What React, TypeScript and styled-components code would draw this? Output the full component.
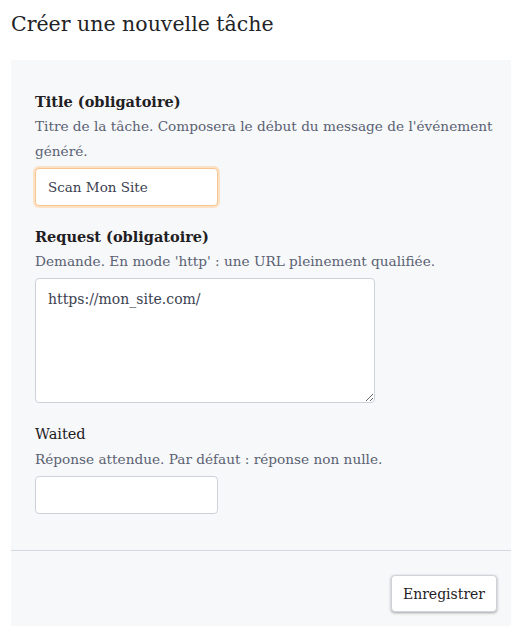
import React, { useEffect, useRef } from "react";
import styled, { createGlobalStyle } from "styled-components";

const Global = createGlobalStyle`
  html, body { margin: 0; padding: 0; background: #ffffff; }
  body { font-family: "DejaVu Serif", Georgia, serif; color: #1f2023; }
  * { box-sizing: border-box; }
`;

const Page = styled.div`
  padding: 0 0 0 11px;
  width: 511px;
  overflow: hidden;
`;

const Heading = styled.h1`
  margin: 0;
  padding-top: 10px;
  height: 60px;
  font-size: 20.5px;
  line-height: 28px;
  font-weight: 400;
  color: #222326;
`;

const Panel = styled.div`
  background: #f7f8fa;
`;

const Body = styled.div`
  padding: 29px 14px 36px 24px;
`;

const Field = styled.div<{ $gap: number }>`
  margin-bottom: ${(p) => p.$gap}px;
`;

const Label = styled.label<{ $bold?: boolean }>`
  display: block;
  font-size: 14.5px;
  line-height: 25px;
  font-weight: ${(p) => (p.$bold ? 700 : 400)};
  color: #1f2023;
`;

const Help = styled.div`
  font-size: 13.65px;
  line-height: 25px;
  color: #5a6172;
  margin-bottom: 4px;
`;

const TextInput = styled.input<{ $focus?: boolean }>`
  display: block;
  width: 183px;
  height: 38px;
  padding: 0 12px;
  font-family: "DejaVu Serif", Georgia, serif;
  font-size: 13.5px;
  color: #3b4150;
  background: #ffffff;
  border: 1px solid ${(p) => (p.$focus ? "#f7c592" : "#cdd1d9")};
  border-radius: 4px;
  outline: none;
  box-shadow: ${(p) => (p.$focus ? "0 0 0 2px #fde1c4" : "none")};
  caret-color: #111;
`;

const TextArea = styled.textarea`
  display: block;
  width: 340px;
  height: 125px;
  padding: 8px 12px;
  font-family: "DejaVu Serif", Georgia, serif;
  font-size: 14px;
  line-height: 24px;
  color: #3b4150;
  background: #ffffff;
  border: 1px solid #cdd1d9;
  border-radius: 4px;
  outline: none;
  resize: both;
`;

const Footer = styled.div`
  border-top: 1px solid #d5d8de;
  display: flex;
  justify-content: flex-end;
  padding: 24px 14px 14px 0;
`;

const Button = styled.button`
  width: 106px;
  height: 37px;
  font-family: "DejaVu Serif", Georgia, serif;
  font-size: 14px;
  color: #1f2023;
  background: #ffffff;
  border: 1px solid #d0d3d9;
  border-radius: 4px;
  box-shadow: 0 1px 3px rgba(0, 0, 0, 0.35);
  cursor: pointer;
`;

export default function App() {
  const ref = useRef<HTMLInputElement>(null);
  useEffect(() => {
    const el = ref.current;
    if (el) {
      el.focus();
      const n = el.value.length;
      el.setSelectionRange(n, n);
    }
  }, []);
  return (
    <>
      <Global />
      <Page>
        <Heading>Créer une nouvelle tâche</Heading>
        <Panel>
          <Body>
            <Field $gap={18}>
              <Label $bold>Title (obligatoire)</Label>
              <Help>Titre de la tâche. Composera le début du message de l'événement généré.</Help>
              <TextInput ref={ref} $focus defaultValue="Scan Mon Site" />
            </Field>
            <Field $gap={19}>
              <Label $bold>Request (obligatoire)</Label>
              <Help>Demande. En mode 'http' : une URL pleinement qualifiée.</Help>
              <TextArea defaultValue="https://mon_site.com/" />
            </Field>
            <Field $gap={0}>
              <Label>Waited</Label>
              <Help>Réponse attendue. Par défaut : réponse non nulle.</Help>
              <TextInput />
            </Field>
          </Body>
          <Footer>
            <Button>Enregistrer</Button>
          </Footer>
        </Panel>
      </Page>
    </>
  );
}
